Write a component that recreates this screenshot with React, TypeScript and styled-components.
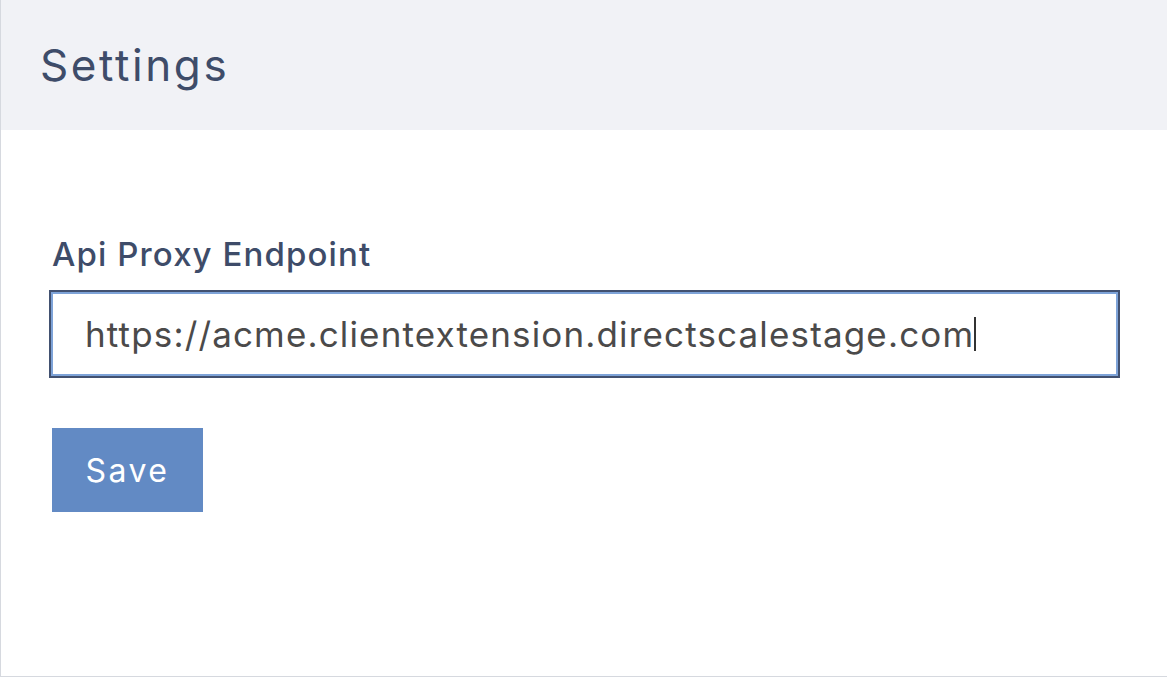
import React from 'react';
import styled, { createGlobalStyle } from 'styled-components';

const GlobalStyle = createGlobalStyle`
	html, body {
		margin: 0;
		padding: 0;
		background: #ffffff;
	}
	body {
		font-family: Inter, 'Liberation Sans', sans-serif;
	}
`;

const Panel = styled.div`
	box-sizing: border-box;
	width: 1167px;
	height: 677px;
	border-left: 1px solid #d6d9df;
	border-bottom: 1px solid #d6d9df;
	display: flex;
	flex-direction: column;
`;

const Header = styled.header`
	height: 130px;
	background: #f1f2f6;
	display: flex;
	align-items: center;
	padding-left: 39px;
`;

const Title = styled.h1`
	margin: 0;
	font-size: 44px;
	font-weight: 400;
	color: #3e4c69;
	letter-spacing: 2.6px;
`;

const Body = styled.div`
	display: flex;
	flex-direction: column;
	align-items: flex-start;
	padding: 102px 48px 0 48px;
`;

const Label = styled.label`
	font-size: 33px;
	font-weight: 500;
	color: #3e4c69;
	margin-left: 3px;
	line-height: 44px;
	margin-bottom: 14px;
	letter-spacing: 1.1px;
`;

const Field = styled.div`
	box-sizing: border-box;
	width: 1071px;
	height: 88px;
	border: 2px solid #425170;
	box-shadow: inset 0 0 0 2px #7ea3d8;
	display: flex;
	align-items: center;
	padding-left: 34px;
	font-size: 35px;
	color: #4b4a4a;
	letter-spacing: 1.15px;
`;

const Caret = styled.span`
	display: inline-block;
	width: 2px;
	height: 34px;
	background: #333;
	vertical-align: middle;
`;

const SaveButton = styled.button`
	margin-top: 50px;
	margin-left: 3px;
	width: 151px;
	height: 84px;
	border: none;
	background: #628ac4;
	color: #ffffff;
	font-family: inherit;
	font-size: 32px;
	font-weight: 400;
	letter-spacing: 2.5px;
	cursor: pointer;
`;

export default function App() {
	return (
		<>
			<GlobalStyle />
			<Panel>
				<Header>
					<Title>Settings</Title>
				</Header>
				<Body>
					<Label>Api Proxy Endpoint</Label>
					<Field>
						https://acme.clientextension.directscalestage.com
						<Caret />
					</Field>
					<SaveButton>Save</SaveButton>
				</Body>
			</Panel>
		</>
	);
}
